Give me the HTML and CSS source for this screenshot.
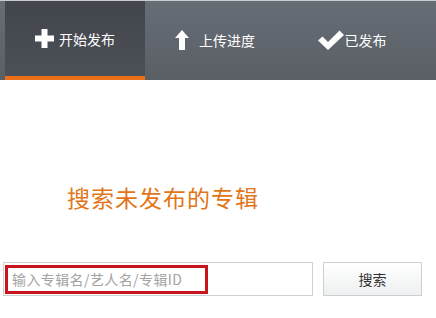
FILE: index.html
```html
<!DOCTYPE html>
<html>
<head>
<meta charset="utf-8">
<link rel="stylesheet" href="styles.css">
</head>
<body>
<div class="nav">
  <div class="tab active">
    <svg class="ico" width="19" height="19" viewBox="0 0 19 19"><path d="M6.5 0h6v6.5H19v6h-6.5V19h-6v-6.5H0v-6h6.5z" fill="#fff"/></svg>
    <span>开始发布</span>
  </div>
  <div class="tab">
    <svg class="ico up" width="14" height="20" viewBox="0 0 14 20"><path d="M7 0L14 8H10V20H4V8H0z" fill="#fff"/></svg>
    <span>上传进度</span>
  </div>
  <div class="tab tight">
    <svg class="ico" width="26" height="20" viewBox="0 0 26 20"><path d="M0 10.5L4.5 6.5 10 12 21.5 0.5 26 5 10 20z" fill="#fff"/></svg>
    <span>已发布</span>
  </div>
</div>
<div class="main">
  <h1 class="title">搜索未发布的专辑</h1>
  <div class="search">
    <div class="field"><div class="hl">输入专辑名/艺人名/专辑ID</div></div>
    <div class="btn">搜索</div>
  </div>
</div>
</body>
</html>
```

FILE: styles.css
```css
* { box-sizing: border-box; }
html, body { margin: 0; padding: 0; background: #fff; }
body { font-family: "Noto Sans CJK SC", "Noto Sans", sans-serif; width: 436px; height: 318px; overflow: hidden; }
.nav {
  height: 80px;
  border-top: 1px solid #c9cbcf;
  background: linear-gradient(#676d75, #5a5f66);
  display: flex;
  padding-left: 5px;
}
.tab {
  width: 140px;
  height: 79px;
  display: flex;
  align-items: center;
  justify-content: center;
  gap: 5px;
  color: #fff;
  font-size: 14px;
  padding-bottom: 2px;
}
.tab.tight { gap: 1px; padding-right: 6px; }
.tab.active {
  background: linear-gradient(#42464c, #4b4f56);
  border-bottom: 4px solid #ea6f17;
  padding-bottom: 0;
}
.tab .up { margin-right: 5px; }
.ico { display: block; }
.main { padding: 0 3px; }
.title {
  margin: 100px 0 0 64px;
  font-size: 23px;
  font-weight: normal;
  color: #e27517;
  line-height: 34px;
  letter-spacing: 1px;
}
.search { display: flex; margin-top: 48px; gap: 10px; }
.field {
  width: 310px;
  height: 34px;
  border: 1px solid #cfd0d2;
  padding: 2px 0 0 1px;
}
.hl {
  width: 203px;
  height: 29px;
  border: 3px solid #c8141c;
  color: #a3a3a3;
  font-size: 14px;
  letter-spacing: 0.4px;
  line-height: 23px;
  padding-left: 4px;
  white-space: nowrap;
}
.btn {
  width: 99px;
  height: 34px;
  border: 1px solid #cfd0d2;
  background: linear-gradient(#ffffff, #eeeff0);
  color: #333;
  font-size: 14px;
  display: flex;
  align-items: center;
  justify-content: center;
}
```
